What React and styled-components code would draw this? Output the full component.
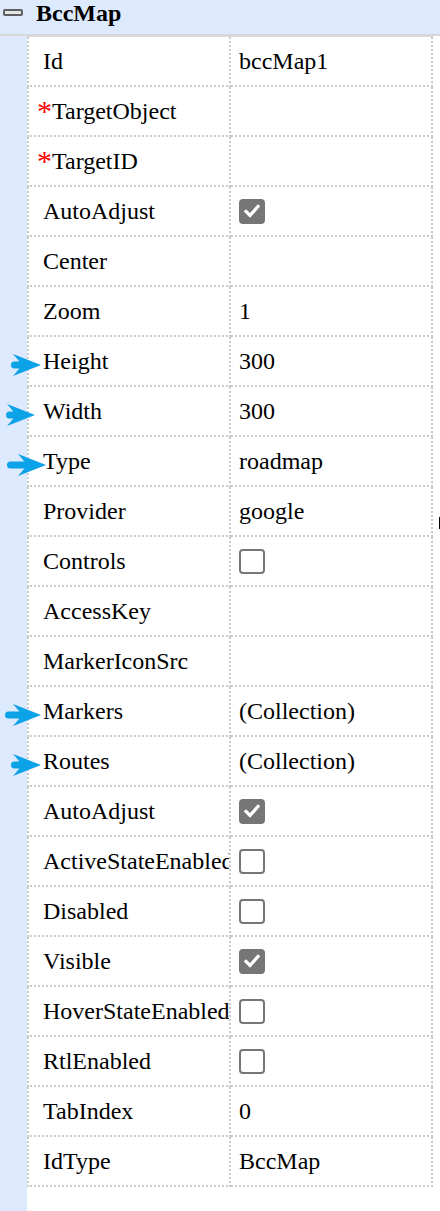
import React from "react";
import styled, { createGlobalStyle } from "styled-components";

const GlobalStyle = createGlobalStyle`
  html, body { margin: 0; padding: 0; background: #ffffff; }
  body { font-family: "Liberation Serif", "Times New Roman", serif; color: #000; }
`;

const BLUE = "#dde9fc";
const RULE = "#d6d8dc";

const Page = styled.div`
  position: relative;
  width: 440px;
  min-height: 1211px;
  display: flex;
  flex-direction: column;
  background: #fff;
`;

const Header = styled.div`
  position: relative;
  z-index: 1;
  height: 34px;
  border-bottom: 2px solid ${RULE};
  background: ${BLUE};
  display: flex;
  align-items: flex-start;
  flex: none;
`;

const Collapse = styled.span`
  display: block;
  box-sizing: border-box;
  width: 20px;
  height: 7px;
  margin: 9px 0 0 3px;
  border: 2px solid #5f5f5f;
  border-radius: 2px;
  background: #e4e4e4;
`;

const Title = styled.span`
  margin-left: 13px;
  font-size: 24px;
  font-weight: bold;
  line-height: normal;
`;

const Body = styled.div`
  flex: 1;
  display: flex;
  align-items: flex-start;
  margin-top: -1px;
`;

const Gutter = styled.div`
  width: 27px;
  align-self: stretch;
  background: ${BLUE};
  flex: none;
`;

const Grid = styled.table`
  width: 406px;
  table-layout: fixed;
  border-collapse: collapse;
  flex: none;

  tr:first-child > td {
    border-top: 2px solid ${RULE};
  }
`;

const Col = styled.col`
  width: 202px;
`;

const Cell = styled.td`
  position: relative;
  padding: 0;
  border: 2px dotted #c9c9c9;
  vertical-align: middle;
`;

const CellInner = styled.div`
  height: 48px;
  display: flex;
  align-items: center;
  padding-left: ${(p) => (p.$value ? "8px" : "14px")};
  overflow: hidden;
  white-space: nowrap;
  font-size: 24px;
  line-height: normal;
`;

const Required = styled.span`
  color: #ff0000;
  font-size: 30px;
  margin-left: -6px;
  line-height: 1;
`;

const Check = styled.span`
  display: inline-flex;
  align-items: center;
  justify-content: center;
  box-sizing: border-box;
  width: 26px;
  height: 25px;
  border-radius: 4px;
  border: 2px solid #767676;
  background: ${(p) => (p.$on ? "#767676" : "#fff")};
`;

const ArrowSvg = styled.svg`
  position: absolute;
  top: 50%;
  overflow: visible;
  pointer-events: none;
`;

const Caret = styled.span`
  position: absolute;
  right: 0;
  top: 517px;
  width: 1px;
  height: 12px;
  background: #000;
`;

function Arrow({ from, to }) {
  const w = to - from;
  const head = 28;
  const notch = Math.min(w - 6, 19);
  return (
    <ArrowSvg
      width={w}
      height={24}
      viewBox={`0 -12 ${w} 24`}
      style={{ left: from - 28, marginTop: -8 }}
    >
      <line
        x1={3.5}
        y1={0}
        x2={w - notch + 2}
        y2={0}
        stroke="#0ba2e8"
        strokeWidth={7}
        strokeLinecap="round"
      />
      <path
        d={`M ${w} 0 L ${w - head} -11 Q ${w - notch - 2} -3 ${w - notch} 0 Q ${w - notch - 2} 3 ${w - head} 11 Z`}
        fill="#0ba2e8"
      />
    </ArrowSvg>
  );
}

function CheckBox({ on }) {
  return (
    <Check $on={on}>
      {on && (
        <svg width="18" height="18" viewBox="0 0 18 18">
          <polyline
            points="3,9.5 7,13.5 15,4.5"
            fill="none"
            stroke="#fff"
            strokeWidth="3.2"
            strokeLinecap="square"
          />
        </svg>
      )}
    </Check>
  );
}

const rows = [
  { label: "Id", value: "bccMap1" },
  { label: "TargetObject", required: true },
  { label: "TargetID", required: true },
  { label: "AutoAdjust", check: true },
  { label: "Center" },
  { label: "Zoom", value: "1" },
  { label: "Height", value: "300", arrow: [10, 40] },
  { label: "Width", value: "300", arrow: [5, 34] },
  { label: "Type", value: "roadmap", arrow: [6, 45] },
  { label: "Provider", value: "google" },
  { label: "Controls", check: false },
  { label: "AccessKey" },
  { label: "MarkerIconSrc" },
  { label: "Markers", value: "(Collection)", arrow: [4, 40] },
  { label: "Routes", value: "(Collection)", arrow: [10, 40] },
  { label: "AutoAdjust", check: true },
  { label: "ActiveStateEnabled", check: false },
  { label: "Disabled", check: false },
  { label: "Visible", check: true },
  { label: "HoverStateEnabled", check: false },
  { label: "RtlEnabled", check: false },
  { label: "TabIndex", value: "0" },
  { label: "IdType", value: "BccMap" },
];

export default function App() {
  return (
    <>
      <GlobalStyle />
      <Page>
        <Header>
          <Collapse />
          <Title>BccMap</Title>
        </Header>
        <Body>
          <Gutter />
          <Grid>
            <colgroup>
              <Col />
              <Col />
            </colgroup>
            <tbody>
              {rows.map((r, i) => (
                <tr key={i}>
                  <Cell>
                    {r.arrow && <Arrow from={r.arrow[0]} to={r.arrow[1]} />}
                    <CellInner>
                      {r.required && <Required>*</Required>}
                      {r.label}
                    </CellInner>
                  </Cell>
                  <Cell>
                    <CellInner $value>
                      {r.check !== undefined ? <CheckBox on={r.check} /> : r.value}
                    </CellInner>
                  </Cell>
                </tr>
              ))}
            </tbody>
          </Grid>
        </Body>
        <Caret />
      </Page>
    </>
  );
}
